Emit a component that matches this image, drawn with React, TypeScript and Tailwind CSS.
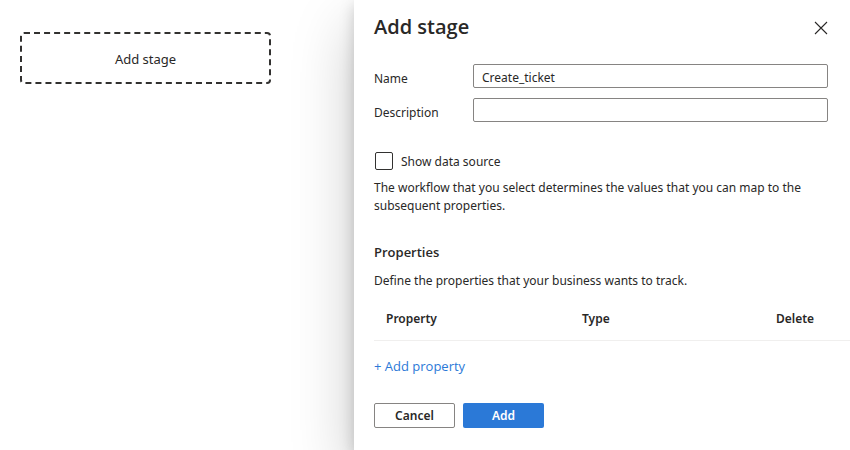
import { useState } from "react";

const columns = [
  { label: "Property", width: "w-[196px]" },
  { label: "Type", width: "w-[194px]" },
  { label: "Delete", width: "" },
];

function CloseIcon() {
  return (
    <svg viewBox="0 0 14 14" className="size-3.5" fill="none" stroke="currentColor" strokeWidth="1.1" aria-hidden="true">
      <path d="M1 1 13 13M13 1 1 13" />
    </svg>
  );
}

function Field({ id, label, value, onChange }: { id: string; label: string; value: string; onChange: (value: string) => void }) {
  return (
    <div className="flex items-center">
      <label htmlFor={id} className="w-[99px] shrink-0 pt-1.5">
        {label}
      </label>
      <input
        id={id}
        type="text"
        value={value}
        onChange={(event) => onChange(event.target.value)}
        className="h-6 min-w-0 flex-1 rounded-xs border border-[#868482] bg-white px-2 pt-0.5 outline-none"
      />
    </div>
  );
}

export default function App() {
  const [name, setName] = useState("Create_ticket");
  const [description, setDescription] = useState("");
  const [showSource, setShowSource] = useState(false);

  return (
    <div className="flex min-h-screen overflow-hidden bg-white font-['Noto_Sans',sans-serif] text-[12px] leading-[18px] text-[#292827]">
      <main className="w-[354px] shrink-0 pt-8 pl-5">
        <button type="button" className="h-[52px] w-[251px] rounded-sm border-2 border-dashed border-[#323130] bg-white pt-0.5 text-[13px]">
          Add stage
        </button>
      </main>

      <section
        aria-labelledby="panel-title"
        className="min-w-0 flex-1 bg-white pl-5 shadow-[0_26px_58px_0_rgba(0,0,0,0.22),0_5px_14px_0_rgba(0,0,0,0.18)]"
      >
        <header className="flex h-16 items-start justify-between pt-3 pr-[22px]">
          <h1 id="panel-title" className="font-['Open_Sans',sans-serif] text-[20px] leading-[30px] font-semibold">
            Add stage
          </h1>
          <button type="button" aria-label="Close" className="flex h-8 items-center">
            <CloseIcon />
          </button>
        </header>

        <div className="flex flex-col gap-2.5 pr-[22px]">
          <Field id="name" label="Name" value={name} onChange={setName} />
          <Field id="description" label="Description" value={description} onChange={setDescription} />
        </div>

        <label className="mt-[29px] flex items-center gap-2">
          <input
            type="checkbox"
            checked={showSource}
            onChange={(event) => setShowSource(event.target.checked)}
            className="ml-px size-[18px] appearance-none rounded-xs border border-[#323130] bg-white checked:bg-[#2b79d7]"
          />
          <span className="pt-0.5">Show data source</span>
        </label>
        <p className="mt-2 max-w-[450px]">
          The workflow that you select determines the values that you can map to the subsequent properties.
        </p>

        <h2 className="mt-7 font-['Open_Sans',sans-serif] text-[13px] font-semibold">Properties</h2>
        <p className="mt-[11px]">Define the properties that your business wants to track.</p>

        <table className="mt-1.5 w-full table-fixed border-collapse">
          <thead>
            <tr className="h-[44px] border-b border-[#f0efee]">
              {columns.map((column) => (
                <th key={column.label} scope="col" className={`pt-0.5 pl-3 text-left font-semibold ${column.width}`}>
                  {column.label}
                </th>
              ))}
            </tr>
          </thead>
        </table>

        <button type="button" className="mt-4 block font-['Open_Sans',sans-serif] text-[13px] text-[#2b79d7]">
          + Add property
        </button>

        <footer className="mt-7 flex gap-2 pb-[21px]">
          <button type="button" className="h-[25px] w-[81px] rounded-xs border border-[#868482] bg-white pt-0.5 font-semibold">
            Cancel
          </button>
          <button type="button" className="h-[25px] w-[81px] rounded-xs bg-[#2b79d7] pt-0.5 font-semibold text-white">
            Add
          </button>
        </footer>
      </section>
    </div>
  );
}
